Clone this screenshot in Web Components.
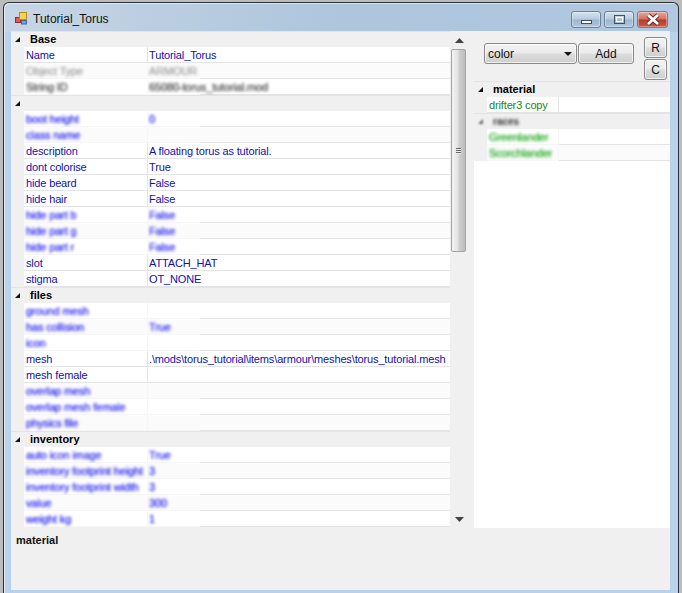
<!DOCTYPE html>
<html>
<head>
<meta charset="utf-8">
<title>Tutorial_Torus</title>
<style>
  html, body { margin: 0; height: 593px; overflow: hidden; background: #bcbcbc; }
  body { font: 11px "Liberation Sans", Arial, sans-serif; }
</style>
</head>
<body>
<tool-window caption="Tutorial_Torus">
  <div slot="left" style="display:contents">
    <prop-grid name-width="124" soft-width="189" height="497" scroll>
      <prop-cat label="Base"></prop-cat>
      <prop-row label="Name">Tutorial_Torus</prop-row>
      <prop-row label="Object Type" blur tone="gray" alt>ARMOUR</prop-row>
      <prop-row label="String ID" blur tone="dark">65080-torus_tutorial.mod</prop-row>
      <prop-cat label=""></prop-cat>
      <prop-row label="boot height" blur>0</prop-row>
      <prop-row label="class name" blur alt></prop-row>
      <prop-row label="description">A floating torus as tutorial.</prop-row>
      <prop-row label="dont colorise">True</prop-row>
      <prop-row label="hide beard">False</prop-row>
      <prop-row label="hide hair">False</prop-row>
      <prop-row label="hide part b" blur>False</prop-row>
      <prop-row label="hide part g" blur alt>False</prop-row>
      <prop-row label="hide part r" blur>False</prop-row>
      <prop-row label="slot">ATTACH_HAT</prop-row>
      <prop-row label="stigma">OT_NONE</prop-row>
      <prop-cat label="files"></prop-cat>
      <prop-row label="ground mesh" blur></prop-row>
      <prop-row label="has collision" blur alt>True</prop-row>
      <prop-row label="icon" blur></prop-row>
      <prop-row label="mesh">.\mods\torus_tutorial\items\armour\meshes\torus_tutorial.mesh</prop-row>
      <prop-row label="mesh female"></prop-row>
      <prop-row label="overlap mesh" blur alt></prop-row>
      <prop-row label="overlap mesh female" blur></prop-row>
      <prop-row label="physics file" blur alt></prop-row>
      <prop-cat label="inventory"></prop-cat>
      <prop-row label="auto icon image" blur>True</prop-row>
      <prop-row label="inventory footprint height" blur alt>3</prop-row>
      <prop-row label="inventory footprint width" blur>3</prop-row>
      <prop-row label="value" blur alt>300</prop-row>
      <prop-row label="weight kg" blur>1</prop-row>
    </prop-grid>
  </div>
  <tool-bar slot="right"></tool-bar>
  <prop-grid slot="right" name-width="72" soft-width="85" height="447">
    <prop-cat label="material"></prop-cat>
    <prop-row label="drifter3 copy" tone="green"></prop-row>
    <prop-cat label="races" blur></prop-cat>
    <prop-row label="Greenlander" blur tone="green"></prop-row>
    <prop-row label="Scorchlander" blur tone="green" alt></prop-row>
  </prop-grid>
  <strong slot="help">material</strong>
</tool-window>

<script>
// small helper, every element just stamps its own shadow root
function shadow(el, html) {
  el.attachShadow({mode: "open"}).innerHTML = html;
  return el.shadowRoot;
}

class ToolWindow extends HTMLElement {
  connectedCallback() {
    const caption = this.getAttribute("caption");
    shadow(this, `
      <style>
        :host { display: flex; flex-direction: column; box-sizing: border-box; width: 676px; height: 591px; margin: 2px 0 0 3px;
          border: 1px solid #2c3338; border-bottom: 0; border-radius: 6px 6px 0 0;
          background: linear-gradient(100deg, #c6d6e6 0, #aec5dc 50%, #b0c8e0 100%) top / 100% 29px no-repeat, #b9d1ea;
          box-shadow: inset 1px 1px 0 rgba(255,255,255,.5);
          padding: 0 8px 3px 7px; }
        .title { display: flex; align-items: flex-start; height: 28px; flex: none; }
        .title svg.app { margin: 9px 5px 0 4px; }
        .title span { margin-top: 8px; font: 12px/17px "Liberation Sans", Arial, sans-serif; color: #111; flex: 1; }
        .caps { display: flex; gap: 3px; margin: 8px 2px 0 0; }
        .client { flex: 1; display: flex; flex-direction: column; background: #f0f0f0; }
        .top { display: flex; height: 497px; flex: none; }
        .right { display: flex; flex-direction: column; width: 196px; margin-left: 6px; }
        .help { flex: 1; padding: 5px 5px; font: bold 11px/14px "Liberation Sans", Arial, sans-serif; color: #111; }
      </style>
      <div class="title">
        <svg class="app" width="13" height="13" viewBox="0 0 13 13">
          <rect x="0.5" y="5.5" width="5" height="5" fill="#e8584c" stroke="#90302a"/>
          <rect x="4.5" y="0.5" width="7" height="7" fill="#f8d24a" stroke="#b88a1c"/>
          <rect x="6.5" y="8.5" width="5" height="3.5" fill="#6da2dc" stroke="#3a6aa6"/>
        </svg>
        <span>${caption}</span>
        <div class="caps">
          <cap-button kind="min"></cap-button>
          <cap-button kind="max"></cap-button>
          <cap-button kind="close"></cap-button>
        </div>
      </div>
      <div class="client">
        <div class="top">
          <slot name="left"></slot>
          <div class="right"><slot name="right"></slot></div>
        </div>
        <div class="help"><slot name="help"></slot></div>
      </div>`);
  }
}

class CapButton extends HTMLElement {
  connectedCallback() {
    const kind = this.getAttribute("kind");
    const glyphs = {
      min: `<rect x="9.5" y="8.5" width="10" height="3" fill="#fff" stroke="#3e4f66"/>`,
      max: `<rect x="9.5" y="3.5" width="10" height="8" fill="none" stroke="#3e4f66" stroke-width="1"/><rect x="11.5" y="5.5" width="6" height="4" fill="none" stroke="#fff"/>`,
      close: `<path d="M10 3 L20 12 M20 3 L10 12" stroke="#5a2a24" stroke-width="4.4"/><path d="M10 3 L20 12 M20 3 L10 12" stroke="#fff" stroke-width="2.8"/>`
    };
    const bg = kind === "close"
      ? "linear-gradient(#e9a79c, #d4705f 48%, #b83a2c 52%, #c9584a)"
      : "linear-gradient(#d5e2ef, #b6cbe0 48%, #9cb6d2 52%, #b0c7e0)";
    shadow(this, `
      <style>
        :host { display: block; box-sizing: border-box; width: ${kind === "close" ? 31 : 30}px; height: 17px;
          border: 1px solid #6f8096; border-radius: 3px; background: ${bg};
          box-shadow: inset 0 0 0 1px rgba(255,255,255,.35); }
        svg { display: block; }
      </style>
      <svg width="29" height="15" viewBox="0 0 29 15">${glyphs[kind]}</svg>`);
  }
}

class PropGrid extends HTMLElement {
  connectedCallback() {
    const scroll = this.hasAttribute("scroll");
    shadow(this, `
      <style>
        :host { display: flex; height: ${this.getAttribute("height")}px; flex: none;
          --name-w: ${this.getAttribute("name-width")}px; --soft-w: ${this.getAttribute("soft-width")}px; background: #fff; }
        :host([scroll]) { background: #f0f0f0; }
        .rows { flex: 1; display: flex; flex-direction: column; min-width: 0; }
        :host([scroll]) .rows { width: 439px; flex: none; }
      </style>
      <div class="rows"><slot></slot></div>
      ${scroll ? "<scroll-bar></scroll-bar>" : ""}`);
  }
}

class PropCat extends HTMLElement {
  connectedCallback() {
    const blur = this.hasAttribute("blur");
    shadow(this, `
      <style>
        :host { display: flex; align-items: center; height: 16px; flex: none; box-sizing: border-box;
          background: #f0f0f0; border-top: 1px solid #e4e4e4; }
        svg { margin-left: 3px; flex: none; ${blur ? "filter: blur(1px); opacity: .6;" : ""} }
        b { margin-left: 9px; font: bold 11px/15px "Liberation Sans", Arial, sans-serif; color: #000; white-space: nowrap;
          ${blur ? "filter: blur(1.4px); color: #333; font-size: 10px;" : ""} }
      </style>
      <svg width="7" height="7" viewBox="0 0 7 7"><path d="M6 1 V6 H1 Z" fill="#111"/></svg>
      <b>${this.getAttribute("label")}</b>`);
  }
}

class PropRow extends HTMLElement {
  connectedCallback() {
    const blur = this.hasAttribute("blur");
    const tone = this.getAttribute("tone") || "blue";
    const sharp = { blue: "#1010b4", green: "#188818", gray: "#777", dark: "#444" }[tone];
    const soft = { blue: "#3a3af0", green: "#30b030", gray: "#a8a8a8", dark: "#5a5a5a" }[tone];
    const line = blur
      ? "linear-gradient(to right, #f6f6f6 var(--soft-w), #e4e4e4 var(--soft-w))"
      : "linear-gradient(#e4e4e4, #e4e4e4)";
    shadow(this, `
      <style>
        :host { display: grid; grid-template-columns: 13px var(--name-w) 1fr; height: 16px; flex: none;
          background: ${line} bottom / 100% 1px no-repeat, ${this.hasAttribute("alt") ? "#fbfbfb" : "#fff"};
          font: 11px/17px "Liberation Sans", Arial, sans-serif; color: ${blur ? soft : sharp}; }
        .gut { background: #f0f0f0; }
        .cell { padding-left: 2px; white-space: nowrap; overflow: hidden; letter-spacing: -.14px; }
        .name { border-right: 1px solid ${blur ? "#f6f6f6" : "#e4e4e4"}; box-sizing: border-box; }
        .val { padding-left: 1px; }
        .txt { display: inline-block; ${blur ? "filter: blur(1.8px); text-shadow: 0 0 1px currentColor;" : ""} }
      </style>
      <div class="gut"></div>
      <div class="cell name"><span class="txt">${this.getAttribute("label")}</span></div>
      <div class="cell val"><span class="txt"><slot></slot></span></div>`);
  }
}

class ScrollBar extends HTMLElement {
  connectedCallback() {
    shadow(this, `
      <style>
        :host { display: flex; flex-direction: column; align-items: center; width: 17px; flex: none; margin-left: 1px; background: #f0f0f0; }
        .btn { height: 18px; flex: none; display: flex; align-items: center; justify-content: center; }
        .track { flex: 1; align-self: stretch; }
        .thumb { box-sizing: border-box; height: 203px; width: 15px; border: 1px solid #a2a2a2; border-radius: 2px;
          background: linear-gradient(to right, #f4f4f4, #e2e2e2 45%, #cfcfcf 55%, #bcbcbc);
          display: flex; align-items: center; justify-content: center; }
        .grip { width: 5px; height: 6px; background: repeating-linear-gradient(#666 0 1px, #eee 1px 2px); }
      </style>
      <div class="btn"><svg width="9" height="5" viewBox="0 0 9 5"><path d="M4.5 0 L9 5 H0 Z" fill="#444"/></svg></div>
      <div class="track"><div class="thumb"><div class="grip"></div></div></div>
      <div class="btn"><svg width="9" height="5" viewBox="0 0 9 5"><path d="M0 0 H9 L4.5 5 Z" fill="#444"/></svg></div>`);
  }
}

class WinButton extends HTMLElement {
  connectedCallback() {
    shadow(this, `
      <style>
        :host { display: flex; align-items: center; justify-content: center; box-sizing: border-box;
          border: 1px solid #8a8a8a; border-radius: 3px; background: linear-gradient(#f2f2f2, #ebebeb 48%, #dcdcdc 52%, #cfcfcf);
          box-shadow: inset 0 0 0 1px rgba(255,255,255,.7);
          font: 12px/14px "Liberation Sans", Arial, sans-serif; color: #111; }
      </style>
      <slot></slot>`);
  }
}

class ComboBox extends HTMLElement {
  connectedCallback() {
    shadow(this, `
      <style>
        :host { display: flex; align-items: center; justify-content: space-between; box-sizing: border-box; width: 93px; height: 21px;
          padding: 0 4px 0 3px; border: 1px solid #8a8a8a; border-radius: 3px;
          background: linear-gradient(#f2f2f2, #ebebeb 48%, #dcdcdc 52%, #cfcfcf);
          box-shadow: inset 0 0 0 1px rgba(255,255,255,.7);
          font: 12px/14px "Liberation Sans", Arial, sans-serif; color: #111; }
      </style>
      <span><slot></slot></span>
      <svg width="8" height="4" viewBox="0 0 8 4"><path d="M0 0 H8 L4 4 Z" fill="#111"/></svg>`);
  }
}

class ToolBar extends HTMLElement {
  connectedCallback() {
    shadow(this, `
      <style>
        :host { display: flex; height: 50px; flex: none; padding-left: 10px; }
        .pick { display: flex; margin-top: 12px; height: 21px; gap: 1px; }
        .side { display: flex; flex-direction: column; gap: 1px; margin: 6px 0 0 10px; }
        .side win-button { width: 23px; height: 21px; }
        .add { width: 56px; height: 21px; }
      </style>
      <div class="pick">
        <combo-box>color</combo-box>
        <win-button class="add">Add</win-button>
      </div>
      <div class="side">
        <win-button>R</win-button>
        <win-button>C</win-button>
      </div>`);
  }
}

customElements.define("tool-window", ToolWindow);
customElements.define("cap-button", CapButton);
customElements.define("prop-grid", PropGrid);
customElements.define("prop-cat", PropCat);
customElements.define("prop-row", PropRow);
customElements.define("scroll-bar", ScrollBar);
customElements.define("win-button", WinButton);
customElements.define("combo-box", ComboBox);
customElements.define("tool-bar", ToolBar);
</script>
</body>
</html>
